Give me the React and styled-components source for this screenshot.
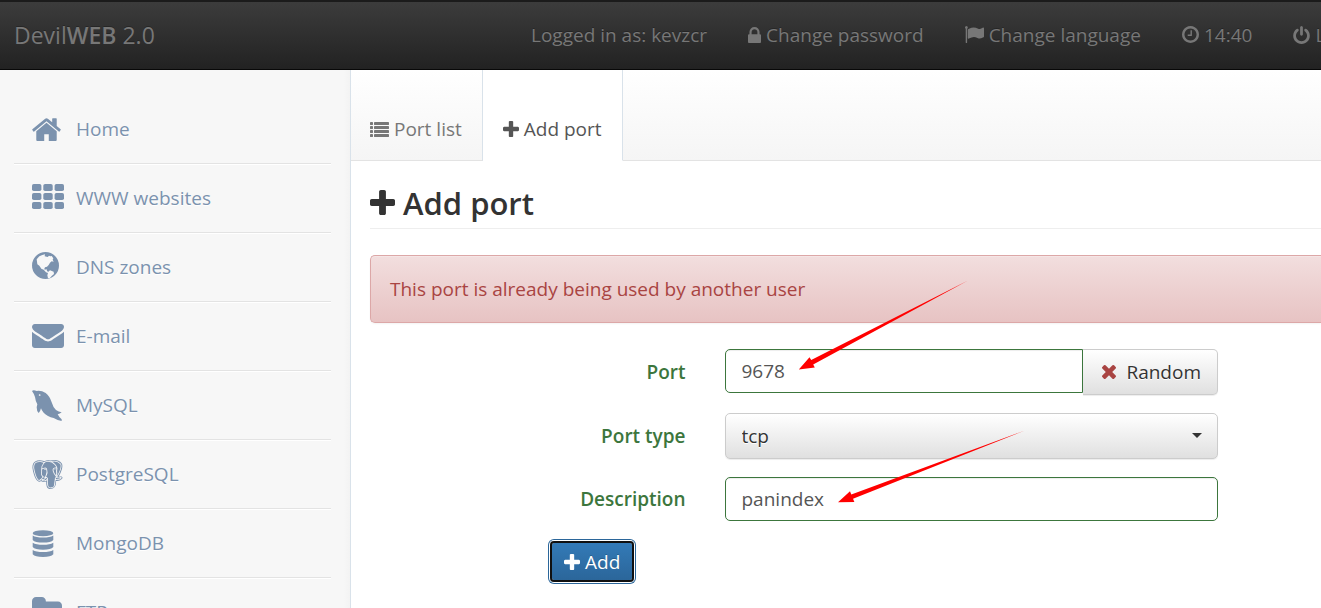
import React from "react";
import styled, { createGlobalStyle, css } from "styled-components";
import { BiLogoPostgresql } from "react-icons/bi";

const GlobalStyle = createGlobalStyle`
  *, *::before, *::after { box-sizing: border-box; }
  html { height: 100%; overflow: hidden; }
  body {
    margin: 0;
    height: 100%;
    overflow: hidden;
    background: #fff;
    color: #333;
    font-family: "Open Sans", "Noto Sans", sans-serif;
    font-size: 19px;
    line-height: 26px;
  }
  #root { height: 100%; }
  button, input, select { font: inherit; margin: 0; }
`;

/* ---------- icons ---------- */

const Glyph = styled.svg`
  display: block;
  flex: none;
  fill: currentColor;
`;

const PLUS =
  "M1600 736v192q0 40-28 68t-68 28h-416v416q0 40-28 68t-68 28h-192q-40 0-68-28t-28-68v-416h-416q-40 0-68-28t-28-68v-192q0-40 28-68t68-28h416v-416q0-40 28-68t68-28h192q40 0 68 28t28 68v416h416q40 0 68 28t28 68z";

const PlusIcon = ({ size }) => (
  <Glyph width={size} height={size} viewBox="192 128 1408 1408" aria-hidden="true">
    <path d={PLUS} />
  </Glyph>
);

const TimesIcon = () => (
  <Glyph width="14" height="14" viewBox="302 302 1188 1188" aria-hidden="true">
    <path d="M1490 1322q0 40-28 68l-136 136q-28 28-68 28t-68-28l-294-294-294 294q-28 28-68 28t-68-28l-136-136q-28-28-28-68t28-68l294-294-294-294q-28-28-28-68t28-68l136-136q28-28 68-28t68 28l294 294 294-294q28-28 68-28t68 28l136 136q28 28 28 68t-28 68l-294 294 294 294q28 28 28 68z" transform="translate(0 -64)" />
  </Glyph>
);

const ListIcon = () => (
  <Glyph width="19" height="15" viewBox="0 0 19 15" aria-hidden="true">
    {[0, 4, 8, 12].map((y) => (
      <React.Fragment key={y}>
        <rect x="0" y={y} width="3" height="3" rx="0.4" />
        <rect x="4" y={y} width="15" height="3" rx="0.4" />
      </React.Fragment>
    ))}
  </Glyph>
);

const LockIcon = () => (
  <Glyph width="13" height="16" viewBox="320 128 1152 1408" aria-hidden="true">
    <path d="M640 768h512v-192q0-106-75-181t-181-75-181 75-75 181v192zm832 96v576q0 40-28 68t-68 28h-960q-40 0-68-28t-28-68v-576q0-40 28-68t68-28h32v-192q0-184 132-316t316-132 316 132 132 316v192h32q40 0 68 28t28 68z" />
  </Glyph>
);

const FlagIcon = () => (
  <Glyph width="19" height="17" viewBox="64 128 1728 1536" aria-hidden="true">
    <path d="M320 256q0 72-64 110v1266q0 13-9.5 22.5t-22.5 9.5h-64q-13 0-22.5-9.5t-9.5-22.5v-1266q-64-38-64-110 0-53 37.5-90.5t90.5-37.5 90.5 37.5 37.5 90.5zm1472 64v763q0 25-12.5 38.5t-39.5 27.5q-215 116-369 116-61 0-123.5-22t-108.5-48-115.5-48-142.5-22q-192 0-464 146-17 9-33 9-26 0-45-19t-19-45v-742q0-32 31-55 21-14 79-43 236-120 421-120 107 0 200 29t219 88q38 19 88 19 54 0 117.5-21t110-47 88-47 54.5-21q26 0 45 19t19 45z" />
  </Glyph>
);

const ClockIcon = () => (
  <Glyph width="17" height="17" viewBox="128 128 1536 1536" aria-hidden="true">
    <path d="M1024 544v448q0 14-9 23t-23 9h-320q-14 0-23-9t-9-23v-64q0-14 9-23t23-9h224v-352q0-14 9-23t23-9h64q14 0 23 9t9 23zm416 352q0-148-73-273t-198-198-273-73-273 73-198 198-73 273 73 273 198 198 273 73 273-73 198-198 73-273zm224 0q0 209-103 385.5t-279.5 279.5-385.5 103-385.5-103-279.5-279.5-103-385.5 103-385.5 279.5-279.5 385.5-103 385.5 103 279.5 279.5 103 385.5z" />
  </Glyph>
);

const PowerIcon = () => (
  <Glyph width="17" height="18" viewBox="128 0 1536 1664" aria-hidden="true">
    <path d="M1664 896q0 156-61 298t-164 245-245 164-298 61-298-61-245-164-164-245-61-298q0-182 80.5-343t226.5-270q43-32 95.5-25t83.5 50q32 42 24.5 94.5t-49.5 84.5q-98 74-151.5 181t-53.5 228q0 104 40.5 198.5t109.5 163.5 163.5 109.5 198.5 40.5 198.5-40.5 163.5-109.5 109.5-163.5 40.5-198.5q0-121-53.5-228t-151.5-181q-42-32-49.5-84.5t24.5-94.5q31-43 84-50t95 25q146 109 226.5 270t80.5 343zm-640-768v640q0 52-38 90t-90 38-90-38-38-90v-640q0-52 38-90t90-38 90 38 38 90z" />
  </Glyph>
);

const HomeIcon = () => (
  <Glyph width="29" height="23" viewBox="84 240 1624 1296" aria-hidden="true">
    <path d="M1472 992v480q0 26-19 45t-45 19h-384v-384h-256v384h-384q-26 0-45-19t-19-45v-480q0-1 .5-3t.5-3l575-474 575 474q1 2 1 6zm223-69l-62 74q-8 9-21 11h-3q-13 0-21-7l-692-577-692 577q-12 8-24 7-13-2-21-11l-62-74q-8-10-7-23.5t11-21.5l719-599q32-26 76-26t76 26l244 204v-195q0-14 9-23t23-9h192q14 0 23 9t9 23v408l219 182q10 8 11 21.5t-7 23.5z" />
  </Glyph>
);

const GridIcon = () => (
  <Glyph width="32" height="29" viewBox="0 0 32 29" aria-hidden="true">
    {[0, 9, 18].map((y) =>
      [0, 11.3, 22.6].map((x) => (
        <rect key={`${x}-${y}`} x={x} y={y} width="9.4" height="7" rx="1.8" />
      ))
    )}
  </Glyph>
);

const GlobeIcon = () => (
  <Glyph width="27" height="30" viewBox="0 0 81 90" aria-hidden="true">
    <circle cx="40.5" cy="40.5" r="40.5" />
    <path
      fill="#f7f7f7"
      d="M14 22l8-9 9-4 8-2-1 6 9 2 4-4 4 2 4-1 5 7-2 4 3 6-6-1-5 4-4 7-5 5-6 2-2 4 1 3 6-1 1 5 4 3-1 3-6-2-7-8-7-3-6-9-6-4z M49 59l5-4 11 4 1 7-7 6-5 6-6 1-2-9z"
    />
  </Glyph>
);

const MailIcon = () => (
  <Glyph width="32" height="24" viewBox="0 256 1792 1408" preserveAspectRatio="none" aria-hidden="true">
    <path d="M1792 710v794q0 66-47 113t-113 47h-1472q-66 0-113-47t-47-113v-794q44 49 101 87 362 246 497 345 57 42 92.5 65.5t94.5 48 110 24.5h2q51 0 110-24.5t94.5-48 92.5-65.5q170-123 498-345 57-39 100-87zm0-294q0 79-49 151t-122 123q-376 261-468 325-10 7-42.5 31t-54 38.5-52 32.5-57.5 27-50 9h-2q-23 0-50-9t-57.5-27-52-32.5-54-38.5-42.5-31q-91-64-262-182.5t-205-142.5q-62-42-117-115.5t-55-136.5q0-78 41.5-130t118.5-52h1472q65 0 112.5 47t47.5 113z" />
  </Glyph>
);

const DolphinIcon = () => (
  <Glyph width="30" height="31" viewBox="0 0 90 93" aria-hidden="true">
    <path d="M0 3Q4-2 14 3q14-2 27 6 12 9 18 28 4 15 13 23 8 5 17 7-5 4-12 6 3 7 12 15v5q-12-2-24-9-19-4-30-16-6-6-8-13-2 9-7 14-6-5-6-17l2-9Q11 36 9 21 6 11 0 3z" />
    <circle cx="23" cy="15" r="2.6" fill="#f7f7f7" />
  </Glyph>
);

const ElephantLogo = styled(BiLogoPostgresql)`
  display: block;
  width: 31px;
  height: 29px;
`;

const ElephantIcon = () => (
  <ElephantLogo viewBox="2 2 20 20" preserveAspectRatio="none" aria-hidden="true" />
);

const DatabaseIcon = () => (
  <Glyph width="22" height="27" viewBox="0 0 22 27" aria-hidden="true">
    <ellipse cx="11" cy="3.2" rx="10.3" ry="3" />
    {[5.6, 12.7, 19.9].map((y) => (
      <path key={y} transform={`translate(0 ${y})`} d="M.7 0Q4 2 11 2T21.300 0V4.300Q19 7 11 7T.7 4.300z" />
    ))}
  </Glyph>
);

const FolderIcon = () => (
  <Glyph width="30" height="30" viewBox="64 256 1664 1664" aria-hidden="true">
    <path d="M1728 608v704q0 92-66 158t-158 66h-1216q-92 0-158-66t-66-158v-832q0-92 66-158t158-66h320q92 0 158 66t66 158v32h672q92 0 158 66t66 158z" />
  </Glyph>
);

/* ---------- page frame ---------- */

const Page = styled.div`
  display: flex;
  flex-direction: column;
  height: 100%;
`;

const Header = styled.header`
  display: flex;
  flex: none;
  align-items: center;
  height: 70px;
  padding-bottom: 2px;
  overflow: hidden;
  border-top: 2px solid #1b1b1b;
  border-bottom: 1px solid #080808;
  background: linear-gradient(#3c3c3c, #222);
  color: #777;
  text-shadow: 0 -1px 0 rgba(0, 0, 0, 0.25);
  white-space: nowrap;
`;

const Brand = styled.a`
  flex: 0 0 511px;
  padding-left: 14px;
  color: inherit;
  font-size: 23px;
  text-decoration: none;
  strong { font-weight: 600; }
`;

const TopNav = styled.nav`
  display: flex;
  flex: none;
`;

const navEntry = css`
  display: flex;
  flex: none;
  align-items: center;
  gap: 5px;
  padding: 0 21px 0 20px;
  color: inherit;
  text-decoration: none;
`;
const NavText = styled.span`${navEntry}`;
const NavLink = styled.a`${navEntry}`;

const Body = styled.div`
  display: flex;
  flex: 1;
  min-height: 0;
  overflow: hidden;
`;

const Sidebar = styled.nav`
  flex: 0 0 351px;
  padding: 25px 19px 0 14px;
  overflow: hidden;
  border-right: 1px solid #d9e2ea;
  background: linear-gradient(to left, #f3f3f3, #f7f7f7 6px);
`;

const Menu = styled.ul`
  margin: 0;
  padding: 0;
  list-style: none;
`;

const MenuItem = styled.li`
  height: 69px;
  border-bottom: 1px solid #e3e3e3;
  box-shadow: 0 1px 0 #fff;
`;

const MenuLink = styled.a`
  display: grid;
  grid-template-columns: 44px 1fr;
  align-items: center;
  height: 100%;
  padding-left: 18px;
  color: #7b92ae;
  text-decoration: none;
  text-shadow: 0 1px 0 #fff;
`;

const Main = styled.main`
  position: relative;
  flex: 1;
  min-width: 0;
`;

const Tabs = styled.nav`
  display: flex;
  height: 91px;
  border-bottom: 1px solid #e3e3e3;
  background: linear-gradient(#fff, #f5f5f5);
`;

const Tab = styled.a`
  display: flex;
  align-items: flex-end;
  gap: 5px;
  height: 91px;
  padding: 0 20px 18px;
  border-right: 1px solid #d9e2ea;
  background: ${(p) => (p.$active ? "#fff" : "none")};
  border-bottom: 1px solid ${(p) => (p.$active ? "#fff" : "#e3e3e3")};
  color: ${(p) => (p.$active ? "#555" : "#777")};
  text-decoration: none;
  &:first-child { padding-left: 19px; }
  svg { margin-bottom: 5px; }
`;

const Content = styled.section`
  padding: 22px 0 0 19px;
`;

const Title = styled.h1`
  display: flex;
  align-items: center;
  gap: 8px;
  height: 46px;
  margin: 0 0 26px;
  padding-bottom: 6px;
  border-bottom: 1px solid #eee;
  font-size: 31px;
  font-weight: 600;
  line-height: 42px;
`;

const Alert = styled.div`
  padding: 20px 19px;
  border: 1px solid #dca7a7;
  border-right: 0;
  border-radius: 5px 0 0 5px;
  background: linear-gradient(#f2dede, #e7c3c3);
  box-shadow: inset 0 1px 0 rgba(255, 255, 255, 0.25), 0 1px 2px rgba(0, 0, 0, 0.05);
  color: #a94442;
`;

/* ---------- form ---------- */

const Form = styled.form`
  display: flex;
  flex-direction: column;
  gap: 18px;
  padding: 26px 103px 0 0;
`;

const Row = styled.div`
  display: grid;
  grid-template-columns: 39fr 61fr;
  column-gap: 39px;
  align-items: center;
`;

const Label = styled.label`
  color: #3c763d;
  font-weight: 600;
  text-align: right;
`;

const Group = styled.div`
  display: flex;
  align-items: flex-start;
`;

const TextInput = styled.input`
  flex: 1;
  width: 100%;
  min-width: 0;
  height: 44px;
  padding: 0 16px;
  border: 1px solid #3c763d;
  border-radius: ${(p) => (p.$joined ? "5px 0 0 5px" : "5px")};
  outline: 0;
  background: #fff;
  box-shadow: inset 0 1px 1px rgba(0, 0, 0, 0.075);
  color: #555;
`;

const raised = css`
  height: 46px;
  border: 1px solid #ccc;
  background: linear-gradient(#fff, #e0e0e0);
  box-shadow: inset 0 1px 0 rgba(255, 255, 255, 0.15), 0 1px 1px rgba(0, 0, 0, 0.075);
  color: #333;
  text-shadow: 0 1px 0 #fff;
`;

const RandomButton = styled.button`
  ${raised}
  display: flex;
  align-items: center;
  gap: 10px;
  padding: 0 16px 0 19px;
  border-left: 0;
  border-radius: 0 5px 5px 0;
  svg { color: #a94442; }
`;

const SelectWrap = styled.div`
  position: relative;
  display: flex;
`;

const Select = styled.select`
  ${raised}
  width: 100%;
  padding: 0 40px 0 16px;
  border-radius: 5px;
  appearance: none;
`;

const Caret = styled.span`
  position: absolute;
  top: 20px;
  right: 16px;
  border: 5px solid transparent;
  border-top-color: #333;
  border-bottom: 0;
  pointer-events: none;
`;

const AddButton = styled.button`
  display: flex;
  align-items: center;
  align-self: flex-start;
  gap: 5px;
  height: 41px;
  margin: 2px 0 0 180px;
  padding: 0 12px;
  border: 2px solid #101010;
  border-radius: 4px;
  background: linear-gradient(#337ab7, #2b669a) padding-box;
  box-shadow: 0 0 0 1px #fff, 0 0 0 2px #2b669a;
  color: #fff;
  text-shadow: 0 -1px 0 rgba(0, 0, 0, 0.2);
`;

const Arrows = styled.svg`
  position: absolute;
  top: 200px;
  left: 439px;
  fill: #f00;
  pointer-events: none;
`;

const MENU = [
  ["Home", HomeIcon],
  ["WWW websites", GridIcon],
  ["DNS zones", GlobeIcon],
  ["E-mail", MailIcon],
  ["MySQL", DolphinIcon],
  ["PostgreSQL", ElephantIcon],
  ["MongoDB", DatabaseIcon],
  ["FTP", FolderIcon],
];

export default function App() {
  return (
    <Page>
      <GlobalStyle />
      <Header>
        <Brand href="#">
          Devil<strong>WEB</strong> 2.0
        </Brand>
        <TopNav>
          <NavText>Logged in as: kevzcr</NavText>
          <NavLink href="#"><LockIcon />Change password</NavLink>
          <NavLink href="#"><FlagIcon />Change language</NavLink>
          <NavText><ClockIcon />14:40</NavText>
          <NavLink href="#"><PowerIcon />Logout</NavLink>
        </TopNav>
      </Header>
      <Body>
        <Sidebar>
          <Menu>
            {MENU.map(([name, Icon]) => (
              <MenuItem key={name}>
                <MenuLink href="#"><Icon />{name}</MenuLink>
              </MenuItem>
            ))}
          </Menu>
        </Sidebar>
        <Main>
          <Tabs>
            <Tab href="#"><ListIcon />Port list</Tab>
            <Tab href="#" $active><PlusIcon size={16} />Add port</Tab>
          </Tabs>
          <Content>
            <Title><PlusIcon size={25} />Add port</Title>
            <Alert role="alert">This port is already being used by another user</Alert>
            <Form onSubmit={(e) => e.preventDefault()}>
              <Row>
                <Label htmlFor="port">Port</Label>
                <Group>
                  <TextInput id="port" defaultValue="9678" $joined />
                  <RandomButton type="button"><TimesIcon />Random</RandomButton>
                </Group>
              </Row>
              <Row>
                <Label htmlFor="type">Port type</Label>
                <SelectWrap>
                  <Select id="type" defaultValue="tcp">
                    <option>tcp</option>
                    <option>udp</option>
                  </Select>
                  <Caret />
                </SelectWrap>
              </Row>
              <Row>
                <Label htmlFor="description">Description</Label>
                <TextInput id="description" defaultValue="panindex" />
              </Row>
              <AddButton type="submit"><PlusIcon size={16} />Add</AddButton>
            </Form>
          </Content>
          <Arrows width="240" height="240" viewBox="790 270 240 240" aria-hidden="true">
            <path d="M798.800 369.400L809.500 357.200L811.200 360L968 280.500L813.200 364.500L814.800 367.500z" />
            <path d="M838 502.300L850 491.300L851.300 494.500L1025 430.500L853 498.700L854.400 502z" />
          </Arrows>
        </Main>
      </Body>
    </Page>
  );
}
